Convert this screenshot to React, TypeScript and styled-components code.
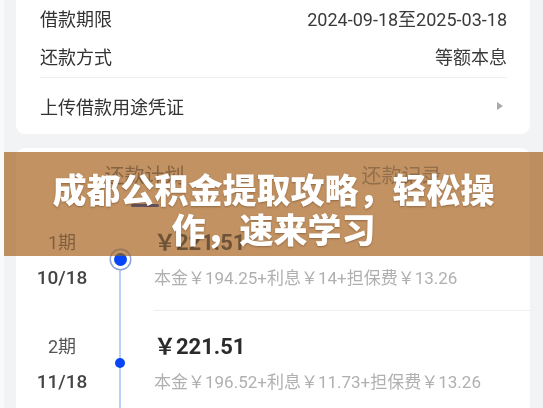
import React from "react";
import styled, { createGlobalStyle } from "styled-components";

const Global = createGlobalStyle`
  html, body { margin: 0; padding: 0; }
  body {
    width: 543px;
    height: 408px;
    overflow: hidden;
    background: #f2f3f5;
    font-family: Roboto, "Noto Sans CJK SC", "Noto Sans", sans-serif;
    -webkit-font-smoothing: antialiased;
  }
`;

const Page = styled.div`
  position: relative;
  box-sizing: border-box;
  width: 543px;
  height: 408px;
  overflow: hidden;
  background: #f2f3f5;
  border-left: 4px solid #fafafb;
  padding: 0 13px 0 12px;
`;

const InfoCard = styled.section`
  background: #fff;
  border-radius: 0 0 9px 9px;
  padding: 0 23px 0 24px;
`;

const InfoRow = styled.div<{ $h: number }>`
  display: flex;
  align-items: center;
  justify-content: space-between;
  height: ${(p) => p.$h}px;
`;

const Label = styled.span`
  font-size: 18px;
  color: #333;
  font-family: "Noto Sans CJK SC", sans-serif;
`;

const Value = styled.span`
  font-size: 18px;
  color: #3a3a3a;
  font-family: Roboto, "Noto Sans CJK SC", sans-serif;
`;

const Divider = styled.div`
  height: 1px;
  background: #eeeeee;
  margin-top: 1px;
`;

const Caret = styled.span`
  width: 0;
  height: 0;
  margin-right: 4px;
  border-top: 4px solid transparent;
  border-bottom: 4px solid transparent;
  border-left: 6px solid #a9a9a9;
`;

const PlanCard = styled.section`
  margin-top: 14px;
  background: #fff;
  border-radius: 9px;
`;

const Tabs = styled.div`
  display: grid;
  grid-template-columns: 1fr 1fr;
  height: 59px;
`;

const Tab = styled.div<{ $active?: boolean }>`
  display: flex;
  flex-direction: column;
  align-items: center;
  padding-top: 13px;
  font-family: "Noto Sans CJK SC", sans-serif;
  font-size: 20px;
  line-height: 28px;
  color: ${(p) => (p.$active ? "#666" : "#888")};
  &::after {
    content: "";
    margin-top: auto;
    margin-bottom: 0;
    width: 28px;
    height: 3px;
    border-radius: 2px;
    background: ${(p) => (p.$active ? "#0c24e6" : "transparent")};
  }
`;

const Item = styled.div`
  display: grid;
  grid-template-columns: 92px 24px 1fr;
  height: 104px;
`;

const DateCol = styled.div`
  display: flex;
  flex-direction: column;
  align-items: center;
  padding-top: 24px;
  gap: 11px;
`;

const Period = styled.div`
  font-family: Roboto, "Noto Sans CJK SC", sans-serif;
  font-size: 18px;
  line-height: 24px;
  color: #555;
`;

const DateText = styled.div`
  font-family: Roboto, "Noto Sans CJK SC", sans-serif;
  font-size: 19px;
  font-weight: 500;
  line-height: 24px;
  color: #444;
`;

const Track = styled.div<{ $first?: boolean }>`
  position: relative;
  display: flex;
  align-items: center;
  justify-content: center;
  &::before {
    content: "";
    position: absolute;
    left: 50%;
    margin-left: -1px;
    width: 2px;
    top: ${(p) => (p.$first ? "52px" : "0")};
    bottom: 0;
    background: #bccff6;
  }
`;

const Dot = styled.span<{ $current?: boolean }>`
  position: relative;
  width: ${(p) => (p.$current ? 13 : 10)}px;
  height: ${(p) => (p.$current ? 13 : 10)}px;
  border-radius: 50%;
  background: #0845f6;
  box-shadow: ${(p) =>
    p.$current ? "0 0 0 3px #fff, 0 0 0 4.5px #8ea3d6" : "none"};
`;

const Content = styled.div<{ $divider?: boolean }>`
  display: flex;
  flex-direction: column;
  margin-left: 22px;
  padding-top: 23px;
  gap: 10px;
  border-bottom: ${(p) => (p.$divider ? "1px solid #efefef" : "none")};
`;

const Amount = styled.div`
  font-family: Roboto, "Noto Sans CJK SC", sans-serif;
  font-size: 22px;
  font-weight: 700;
  line-height: 26px;
  color: #2b2b2b;
`;

const Breakdown = styled.div`
  font-family: Roboto, "Noto Sans CJK SC", sans-serif;
  font-size: 17px;
  line-height: 24px;
  color: #b0b0b0;
`;

const Banner = styled.div`
  position: absolute;
  left: 0;
  right: 0;
  top: 152px;
  height: 104px;
  box-sizing: border-box;
  padding: 17px 40px 0;
  &::before {
    content: "";
    position: absolute;
    inset: 0;
    background: #c29263;
    mix-blend-mode: multiply;
  }
  &::after {
    content: "";
    position: absolute;
    inset: 0;
    background: rgba(194, 146, 99, 0.48);
  }
`;

const Title = styled.h1`
  position: relative;
  z-index: 2;
  margin: 0;
  text-align: center;
  font-family: "Noto Sans CJK SC", sans-serif;
  font-size: 34px;
  font-weight: 900;
  line-height: 40px;
  color: #fff;
  text-shadow: 0 1px 2px rgba(60, 30, 10, 0.35);
`;

const items = [
  {
    period: "1期",
    date: "10/18",
    amount: "￥221.51",
    detail: "本金￥194.25+利息￥14+担保费￥13.26",
    current: true,
  },
  {
    period: "2期",
    date: "11/18",
    amount: "￥221.51",
    detail: "本金￥196.52+利息￥11.73+担保费￥13.26",
    current: false,
  },
];

export default function App() {
  return (
    <>
      <Global />
      <Page>
        <InfoCard>
          <InfoRow $h={36}>
            <Label>借款期限</Label>
            <Value>2024-09-18至2025-03-18</Value>
          </InfoRow>
          <InfoRow $h={40}>
            <Label>还款方式</Label>
            <Value>等额本息</Value>
          </InfoRow>
          <Divider />
          <InfoRow $h={56}>
            <Label>上传借款用途凭证</Label>
            <Caret />
          </InfoRow>
        </InfoCard>
        <PlanCard>
          <Tabs>
            <Tab $active>还款计划</Tab>
            <Tab>还款记录</Tab>
          </Tabs>
          {items.map((it, i) => (
            <Item key={it.period}>
              <DateCol>
                <Period>{it.period}</Period>
                <DateText>{it.date}</DateText>
              </DateCol>
              <Track $first={i === 0}>
                <Dot $current={it.current} />
              </Track>
              <Content $divider={i === 0}>
                <Amount>{it.amount}</Amount>
                <Breakdown>{it.detail}</Breakdown>
              </Content>
            </Item>
          ))}
        </PlanCard>
        <Banner>
          <Title>成都公积金提取攻略，轻松操作，速来学习</Title>
        </Banner>
      </Page>
    </>
  );
}
